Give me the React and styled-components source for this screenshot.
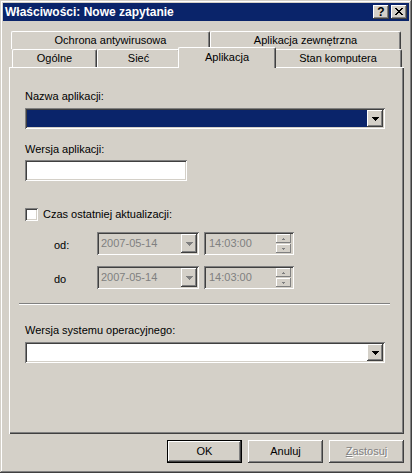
import React from 'react';
import styled, { createGlobalStyle } from 'styled-components';

const GlobalStyle = createGlobalStyle`
  html, body {
    margin: 0;
    padding: 0;
    background: #d4d0c8;
  }
  body {
    font-family: "Liberation Sans", Arial, sans-serif;
    font-size: 11px;
    color: #000;
  }
`;

const raised = `
  box-shadow: inset -1px -1px #404040, inset 1px 1px #ffffff,
    inset -2px -2px #808080, inset 2px 2px #d4d0c8;
`;

const sunken = `
  box-shadow: inset 1px 1px #808080, inset -1px -1px #ffffff,
    inset 2px 2px #404040, inset -2px -2px #d4d0c8;
`;

const Window = styled.div`
  width: 412px;
  height: 473px;
  box-sizing: border-box;
  padding: 3px;
  background: #d4d0c8;
  box-shadow: inset -1px -1px #404040, inset 1px 1px #d4d0c8,
    inset -2px -2px #808080, inset 2px 2px #ffffff;
  display: flex;
  flex-direction: column;
`;

const TitleBar = styled.div`
  height: 18px;
  background: #0a246a;
  display: flex;
  align-items: center;
  padding: 0 2px;
`;

const Title = styled.div`
  flex: 1;
  color: #fff;
  font-weight: bold;
  font-size: 12px;
  line-height: 18px;
`;

const TitleButtons = styled.div`
  display: flex;
  gap: 2px;
`;

const TitleButton = styled.div`
  width: 16px;
  height: 14px;
  box-sizing: border-box;
  background: #d4d0c8;
  ${raised}
  display: flex;
  align-items: center;
  justify-content: center;
  padding-bottom: 1px;
  font-weight: bold;
  font-size: 12px;
  line-height: 12px;
`;

const Body = styled.div`
  flex: 1;
  display: flex;
  flex-direction: column;
  padding: 0 5px 0 6px;
`;

const TabStrip = styled.div`
  margin-top: 10px;
  display: flex;
  flex-direction: column;
`;

const TabRow = styled.div`
  display: flex;
  align-items: flex-start;
  height: 18px;
  padding-left: ${p => p.$indent}px;
`;

const Tab = styled.div`
  position: relative;
  box-sizing: border-box;
  width: ${p => (p.$active ? p.$w + 4 : p.$w)}px;
  height: ${p => (p.$active ? 21 : 18)}px;
  margin: ${p => (p.$active ? '-2px -2px 0 -2px' : '0')};
  padding-top: ${p => (p.$active ? 1 : 0)}px;
  z-index: ${p => (p.$active ? 2 : 1)};
  background: #d4d0c8;
  border-top: 1px solid #fff;
  border-left: 1px solid #fff;
  border-right: 1px solid #404040;
  border-radius: 2px 2px 0 0;
  box-shadow: inset -1px 0 #808080;
  text-align: center;
  line-height: 16px;
  white-space: nowrap;
`;

const Panel = styled.div`
  flex: 1;
  display: flex;
  flex-direction: column;
  align-items: flex-start;
  padding: 23px 0 0 16px;
  box-shadow: inset 1px 1px #ffffff, inset -1px -1px #404040,
    inset -2px -2px #808080;
`;

const Label = styled.div`
  margin-top: ${p => p.$mt || 0}px;
  line-height: 13px;
  white-space: nowrap;
`;

const Combo = styled.div`
  margin-top: ${p => p.$mt || 0}px;
  width: 360px;
  height: 21px;
  box-sizing: border-box;
  padding: 2px;
  display: flex;
  background: #fff;
  ${sunken}
`;

const ComboValue = styled.div`
  flex: 1;
  background: ${p => (p.$selected ? '#0a246a' : '#fff')};
`;

const DropButton = styled.div`
  width: 16px;
  box-sizing: border-box;
  background: #d4d0c8;
  ${raised}
  display: flex;
  align-items: center;
  justify-content: center;
`;

const TextBox = styled.div`
  margin-top: ${p => p.$mt || 0}px;
  width: 162px;
  height: 21px;
  background: #fff;
  ${sunken}
`;

const CheckRow = styled.label`
  margin-top: ${p => p.$mt || 0}px;
  display: flex;
  align-items: center;
  gap: 5px;
  height: 13px;
  line-height: 13px;
`;

const CheckBox = styled.span`
  width: 13px;
  height: 13px;
  box-sizing: border-box;
  background: #fff;
  ${sunken}
`;

const DateRow = styled.div`
  margin-top: ${p => p.$mt || 0}px;
  display: flex;
  align-items: flex-start;
`;

const DateLabel = styled.div`
  width: 43px;
  margin-left: 29px;
  padding-top: 7px;
  line-height: 13px;
`;

const PickerBox = styled.div`
  width: ${p => p.$w}px;
  height: 23px;
  box-sizing: border-box;
  padding: 2px;
  margin-right: ${p => p.$mr || 0}px;
  display: flex;
  align-items: stretch;
  background: #d4d0c8;
  ${sunken}
`;

const PickerText = styled.div`
  flex: 1;
  display: flex;
  align-items: center;
  padding-left: ${p => p.$pl}px;
  color: #808080;
  line-height: 13px;
`;

const Spinner = styled.div`
  width: 15px;
  margin-right: 1px;
  display: flex;
  flex-direction: column;
  justify-content: space-between;
`;

const SpinButton = styled.div`
  height: 9px;
  box-sizing: border-box;
  background: #d4d0c8;
  box-shadow: inset -1px -1px #808080, inset 1px 1px #ffffff;
  display: flex;
  align-items: center;
  justify-content: center;
`;

const Separator = styled.div`
  margin-top: ${p => p.$mt || 0}px;
  margin-left: -6px;
  width: 371px;
  height: 1px;
  background: #808080;
  border-bottom: 1px solid #fff;
`;

const ButtonRow = styled.div`
  display: flex;
  justify-content: flex-end;
  gap: 6px;
  margin: 6px 0 7px;
`;

const Button = styled.div`
  width: 75px;
  height: 23px;
  box-sizing: border-box;
  background: #d4d0c8;
  border: ${p => (p.$default ? '1px solid #000' : 'none')};
  ${raised}
  display: flex;
  align-items: center;
  justify-content: center;
  padding-bottom: 1px;
  color: ${p => (p.$disabled ? '#808080' : '#000')};
  text-shadow: ${p => (p.$disabled ? '1px 1px #fff' : 'none')};

  u {
    text-decoration: underline;
  }
`;

const Arrow = ({ color = '#000' }) => (
  <svg width="7" height="4" viewBox="0 0 7 4" shapeRendering="crispEdges">
    <path fill={color} d="M0 0h7v1H0zM1 1h5v1H1zM2 2h3v1H2zM3 3h1v1H3z" />
  </svg>
);

const SmallArrow = ({ up }) => (
  <svg width="3" height="2" viewBox="0 0 3 2" shapeRendering="crispEdges">
    <path
      fill="#808080"
      d={up ? 'M1 0h1v1H1zM0 1h3v1H0z' : 'M0 0h3v1H0zM1 1h1v1H1z'}
    />
  </svg>
);

const CloseGlyph = () => (
  <svg width="8" height="7" viewBox="0 0 8 7" shapeRendering="crispEdges">
    <path
      fill="#000"
      d="M0 0h2v1H0zM6 0h2v1H6zM1 1h2v1H1zM5 1h2v1H5zM2 2h4v1H2zM3 3h2v1H3zM2 4h4v1H2zM1 5h2v1H1zM5 5h2v1H5zM0 6h2v1H0zM6 6h2v1H6z"
    />
  </svg>
);

const DatePicker = ({ date, time }) => (
  <>
    <PickerBox $w={102} $mr={5}>
      <PickerText $pl={2}>{date}</PickerText>
      <DropButton>
        <Arrow color="#808080" />
      </DropButton>
    </PickerBox>
    <PickerBox $w={90}>
      <PickerText $pl={3}>{time}</PickerText>
      <Spinner>
        <SpinButton>
          <SmallArrow up />
        </SpinButton>
        <SpinButton>
          <SmallArrow />
        </SpinButton>
      </Spinner>
    </PickerBox>
  </>
);

const App = () => (
  <>
    <GlobalStyle />
    <Window>
      <TitleBar>
        <Title>Właściwości: Nowe zapytanie</Title>
        <TitleButtons>
          <TitleButton>?</TitleButton>
          <TitleButton>
            <CloseGlyph />
          </TitleButton>
        </TitleButtons>
      </TitleBar>
      <Body>
        <TabStrip>
          <TabRow $indent={2}>
            <Tab $w={199}>Ochrona antywirusowa</Tab>
            <Tab $w={191}>Aplikacja zewnętrzna</Tab>
          </TabRow>
          <TabRow $indent={3}>
            <Tab $w={85}>Ogólne</Tab>
            <Tab $w={83}>Sieć</Tab>
            <Tab $w={94} $active>Aplikacja</Tab>
            <Tab $w={128}>Stan komputera</Tab>
          </TabRow>
        </TabStrip>
        <Panel>
          <Label>Nazwa aplikacji:</Label>
          <Combo $mt={5}>
            <ComboValue $selected />
            <DropButton>
              <Arrow />
            </DropButton>
          </Combo>
          <Label $mt={14}>Wersja aplikacji:</Label>
          <TextBox $mt={4} />
          <CheckRow $mt={27}>
            <CheckBox />
            Czas ostatniej aktualizacji:
          </CheckRow>
          <DateRow $mt={11}>
            <DateLabel>od:</DateLabel>
            <DatePicker date="2007-05-14" time="14:03:00" />
          </DateRow>
          <DateRow $mt={11}>
            <DateLabel>do</DateLabel>
            <DatePicker date="2007-05-14" time="14:03:00" />
          </DateRow>
          <Separator $mt={14} />
          <Label $mt={19}>Wersja systemu operacyjnego:</Label>
          <Combo $mt={5}>
            <ComboValue />
            <DropButton>
              <Arrow />
            </DropButton>
          </Combo>
        </Panel>
        <ButtonRow>
          <Button $default>OK</Button>
          <Button>Anuluj</Button>
          <Button $disabled>
            <span>
              <u>Z</u>astosuj
            </span>
          </Button>
        </ButtonRow>
      </Body>
    </Window>
  </>
);

export default App;
